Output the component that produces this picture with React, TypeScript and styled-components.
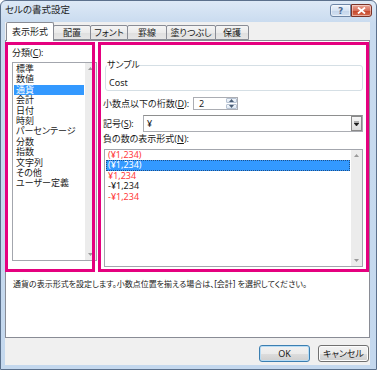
import React from "react";
import styled, { createGlobalStyle } from "styled-components";

const GlobalStyle = createGlobalStyle`
  html, body {
    margin: 0;
    padding: 0;
    background: #ffffff;
  }
  body {
    font-family: "Noto Sans", "Noto Sans CJK JP", sans-serif;
    font-size: 9px;
    color: #1a1a1a;
    font-feature-settings: "palt";
  }
  u {
    text-decoration-thickness: 1px;
    text-underline-offset: 1px;
  }
`;

const PINK = "#e5007f";

const Window = styled.div`
  width: 377px;
  height: 370px;
  box-sizing: border-box;
  border: 1px solid #5b708c;
  border-radius: 6px 6px 0 0;
  background: linear-gradient(#dde9f6, #c9dbef 22px, #c4d8ee);
  display: flex;
  flex-direction: column;
  overflow: hidden;
`;

const TitleBar = styled.div`
  height: 21px;
  flex: none;
  display: flex;
  align-items: flex-start;
  padding: 0 4px;
`;

const Title = styled.div`
  flex: 1;
  line-height: 18px;
  font-size: 9.5px;
  color: #1e1e1e;
`;

const TitleButtons = styled.div`
  display: flex;
  margin-top: 3px;
`;

const CaptionButton = styled.div<{ $close?: boolean }>`
  width: 21px;
  height: 13px;
  box-sizing: border-box;
  border: 1px solid ${(p) => (p.$close ? "#7b3328" : "#6e86a6")};
  border-radius: ${(p) => (p.$close ? "0 3px 3px 0" : "3px 0 0 3px")};
  background: ${(p) =>
    p.$close
      ? "linear-gradient(#eaa596, #d7705d 50%, #c34327 51%, #d56a4f)"
      : "linear-gradient(#eef4fb, #d6e3f2 50%, #c3d4ea 51%, #d3e1f1)"};
  box-shadow: inset 0 0 0 1px rgba(255, 255, 255, 0.45);
  display: flex;
  align-items: center;
  justify-content: center;
  font-family: "DejaVu Sans", sans-serif;
  font-size: 9px;
  font-weight: bold;
  color: #4d6a8f;
`;

const Client = styled.div`
  flex: 1;
  margin: 0 6px 4px 4px;
  background: #f0f0f0;
  display: flex;
  flex-direction: column;
`;

const TabRow = styled.div`
  height: 18px;
  flex: none;
  display: flex;
  align-items: flex-end;
  padding-left: 1px;
  position: relative;
  z-index: 1;
`;

const Tab = styled.div<{ $w: number; $active?: boolean }>`
  width: ${(p) => p.$w}px;
  height: ${(p) => (p.$active ? 19 : 15)}px;
  box-sizing: border-box;
  margin-left: ${(p) => (p.$active ? 0 : -1)}px;
  margin-bottom: ${(p) => (p.$active ? -1 : 0)}px;
  border: 1px solid #898c95;
  border-bottom: ${(p) => (p.$active ? "none" : "1px solid #898c95")};
  border-radius: 2px 2px 0 0;
  background: ${(p) =>
    p.$active ? "#ffffff" : "linear-gradient(#f4f4f4, #ebebeb 50%, #dfdfdf 51%, #e6e6e6)"};
  position: relative;
  z-index: ${(p) => (p.$active ? 2 : 1)};
  display: flex;
  align-items: ${(p) => (p.$active ? "flex-start" : "center")};
  justify-content: center;
  padding-top: ${(p) => (p.$active ? 3 : 0)}px;
  line-height: 12px;
  white-space: nowrap;
`;

const Panel = styled.div`
  height: 298px;
  flex: none;
  box-sizing: border-box;
  border: 1px solid #898c95;
  background: #ffffff;
  display: flex;
  flex-direction: column;
`;

const Columns = styled.div`
  height: 230px;
  margin: 1px 0 0 -1px;
  display: flex;
  gap: 3px;
`;

const Column = styled.div<{ $w: number }>`
  width: ${(p) => p.$w}px;
  box-sizing: border-box;
  padding: 3px;
  position: relative;
  display: flex;
  flex-direction: column;

  &::after {
    content: "";
    position: absolute;
    inset: 0;
    border: 3px solid ${PINK};
    pointer-events: none;
    z-index: 5;
  }
`;

const Label = styled.div<{ $w?: number }>`
  line-height: 12px;
  white-space: nowrap;
  flex: none;
  width: ${(p) => (p.$w ? `${p.$w}px` : "auto")};
`;

const CategoryLabel = styled(Label)`
  padding: 2px 0 0 4px;
`;

const ListBox = styled.div<{ $h: number; $m: string }>`
  height: ${(p) => p.$h}px;
  margin: ${(p) => p.$m};
  box-sizing: border-box;
  border: 1px solid #a3a6ad;
  background: #ffffff;
  display: flex;
`;

const Items = styled.div<{ $pt: number }>`
  flex: 1;
  padding-top: ${(p) => p.$pt}px;
  min-width: 0;
`;

const Item = styled.div<{ $selected?: boolean; $focused?: boolean; $red?: boolean }>`
  height: 10.4px;
  line-height: 10.4px;
  margin: 0 1px;
  padding-left: 2px;
  box-sizing: border-box;
  white-space: nowrap;
  color: ${(p) => (p.$selected ? "#ffffff" : p.$red ? "#ff3b3b" : "#1a1a1a")};
  background: ${(p) => (p.$selected ? "#3399ff" : "transparent")};
  outline: ${(p) => (p.$focused ? "1px dotted #1f4f86" : "none")};
  outline-offset: -1px;
`;

const ScrollTrack = styled.div`
  width: 11px;
  flex: none;
  background: #ececec;
  display: flex;
  flex-direction: column;
  justify-content: space-between;
  align-items: center;
  padding: 4px 0;
  box-sizing: border-box;
`;

const GroupBox = styled.fieldset`
  margin: 14px 3px 0 4px;
  padding: 6px 0 1px 1px;
  border: 1px solid #d5dfe5;
  border-radius: 3px;
  min-inline-size: 0;
`;

const Legend = styled.legend`
  padding: 0;
  line-height: 12px;
`;

const SampleText = styled.div`
  line-height: 12px;
  margin-left: 2px;
`;

const FieldRow = styled.div<{ $mt: number; $h: number }>`
  margin: ${(p) => p.$mt}px 3px 0 2px;
  height: ${(p) => p.$h}px;
  display: flex;
  align-items: center;
`;

const SpinBox = styled.div`
  width: 45px;
  height: 13px;
  box-sizing: border-box;
  border: 1px solid #abadb3;
  display: flex;
`;

const SpinValue = styled.div`
  flex: 1;
  line-height: 11px;
  padding-left: 5px;
`;

const SpinButtons = styled.div`
  width: 11px;
  display: flex;
  flex-direction: column;
  gap: 1px;
`;

const SpinButton = styled.div`
  flex: 1;
  border: 1px solid #b7c3d3;
  border-radius: 1px;
  background: linear-gradient(#f3f7fc, #dfe8f3);
  display: flex;
  align-items: center;
  justify-content: center;
`;

const Select = styled.div`
  flex: 1;
  height: 17px;
  box-sizing: border-box;
  border: 1px solid #abadb3;
  border-top-color: #8e8f8f;
  display: flex;
  align-items: center;
  padding: 0 0 0 3px;
`;

const SelectValue = styled.div`
  flex: 1;
  line-height: 12px;
`;

const DropButton = styled.div`
  width: 11px;
  height: 15px;
  box-sizing: border-box;
  border: 1px solid #8a8a8a;
  background: linear-gradient(#f6f6f6, #dcdcdc);
  display: flex;
  align-items: center;
  justify-content: center;
`;

const NegLabel = styled(Label)`
  margin: 1px 0 0 2px;
`;

const Description = styled.div`
  margin-top: 6px;
  padding-left: 7px;
  line-height: 12px;
  font-size: 8px;
  white-space: nowrap;
`;

const ButtonRow = styled.div`
  margin-top: 7px;
  height: 17px;
  display: flex;
  justify-content: flex-end;
  gap: 8px;
  padding-right: 1px;
`;

const DialogButton = styled.div<{ $default?: boolean }>`
  width: 51px;
  height: 17px;
  box-sizing: border-box;
  border: 1px solid ${(p) => (p.$default ? "#3c7fb1" : "#707070")};
  border-radius: 3px;
  background: linear-gradient(#f2f2f2, #ebebeb 50%, #dddddd 51%, #cfcfcf);
  box-shadow: inset 0 0 0 1px ${(p) => (p.$default ? "#b7dcf5" : "#fcfcfc")};
  display: flex;
  align-items: center;
  justify-content: center;
  line-height: 12px;
`;

const Arrow = ({ up, color = "#9a9a9a" }: { up?: boolean; color?: string }) => (
  <svg width="5" height="3" viewBox="0 0 5 3">
    <path d={up ? "M0 3 L2.5 0 L5 3 Z" : "M0 0 L5 0 L2.5 3 Z"} fill={color} />
  </svg>
);

const categories = [
  "標準",
  "数値",
  "通貨",
  "会計",
  "日付",
  "時刻",
  "パーセンテージ",
  "分数",
  "指数",
  "文字列",
  "その他",
  "ユーザー定義",
];

const negatives = [
  { text: "(¥1,234)", red: true },
  { text: "(¥1,234)", selected: true },
  { text: "¥1,234", red: true },
  { text: "-¥1,234" },
  { text: "-¥1,234", red: true },
];

const tabs = [
  { label: "表示形式", w: 48, active: true },
  { label: "配置", w: 38 },
  { label: "フォント", w: 38 },
  { label: "罫線", w: 40 },
  { label: "塗りつぶし", w: 50 },
  { label: "保護", w: 34 },
];

export default function App() {
  return (
    <>
      <GlobalStyle />
      <Window>
        <TitleBar>
          <Title>セルの書式設定</Title>
          <TitleButtons>
            <CaptionButton>?</CaptionButton>
            <CaptionButton $close>
              <svg width="9" height="7" viewBox="0 0 9 7">
                <path d="M1 0.5 L8 6.5 M8 0.5 L1 6.5" stroke="#ffffff" strokeWidth="1.8" />
              </svg>
            </CaptionButton>
          </TitleButtons>
        </TitleBar>

        <Client>
          <TabRow>
            {tabs.map((t) => (
              <Tab key={t.label} $w={t.w} $active={t.active}>
                {t.label}
              </Tab>
            ))}
          </TabRow>

          <Panel>
            <Columns>
              <Column $w={90}>
                <CategoryLabel>
                  分類(<u>C</u>):
                </CategoryLabel>
                <ListBox $h={199} $m="3px -5px 0 4px">
                  <Items $pt={1}>
                    {categories.map((c) => (
                      <Item key={c} $selected={c === "通貨"}>
                        {c}
                      </Item>
                    ))}
                  </Items>
                  <ScrollTrack>
                    <Arrow up />
                    <Arrow />
                  </ScrollTrack>
                </ListBox>
              </Column>

              <Column $w={271}>
                <GroupBox>
                  <Legend>サンプル</Legend>
                  <SampleText>Cost</SampleText>
                </GroupBox>

                <FieldRow $mt={6} $h={13}>
                  <Label $w={90}>
                    小数点以下の桁数(<u>D</u>):
                  </Label>
                  <SpinBox>
                    <SpinValue>2</SpinValue>
                    <SpinButtons>
                      <SpinButton>
                        <Arrow up color="#4a5d75" />
                      </SpinButton>
                      <SpinButton>
                        <Arrow color="#4a5d75" />
                      </SpinButton>
                    </SpinButtons>
                  </SpinBox>
                </FieldRow>

                <FieldRow $mt={5} $h={17}>
                  <Label $w={40}>
                    記号(<u>S</u>):
                  </Label>
                  <Select>
                    <SelectValue>¥</SelectValue>
                    <DropButton>
                      <svg width="5" height="5" viewBox="0 0 5 5">
                        <path d="M0 0 H5 M0 2 L5 2 L2.5 5 Z" stroke="#1a1a1a" strokeWidth="0.6" fill="#1a1a1a" />
                      </svg>
                    </DropButton>
                  </Select>
                </FieldRow>

                <NegLabel>
                  負の数の表示形式(<u>N</u>):
                </NegLabel>
                <ListBox $h={118} $m="4px 3px 0 3px">
                  <Items $pt={0}>
                    {negatives.map((n, i) => (
                      <Item key={i} $red={n.red} $selected={n.selected} $focused={n.selected}>
                        {n.text}
                      </Item>
                    ))}
                  </Items>
                  <ScrollTrack>
                    <Arrow up />
                    <Arrow />
                  </ScrollTrack>
                </ListBox>
              </Column>
            </Columns>

            <Description>
              通貨の表示形式を設定します。小数点位置を揃える場合は、[会計] を選択してください。
            </Description>
          </Panel>

          <ButtonRow>
            <DialogButton $default>OK</DialogButton>
            <DialogButton>キャンセル</DialogButton>
          </ButtonRow>
        </Client>
      </Window>
    </>
  );
}
